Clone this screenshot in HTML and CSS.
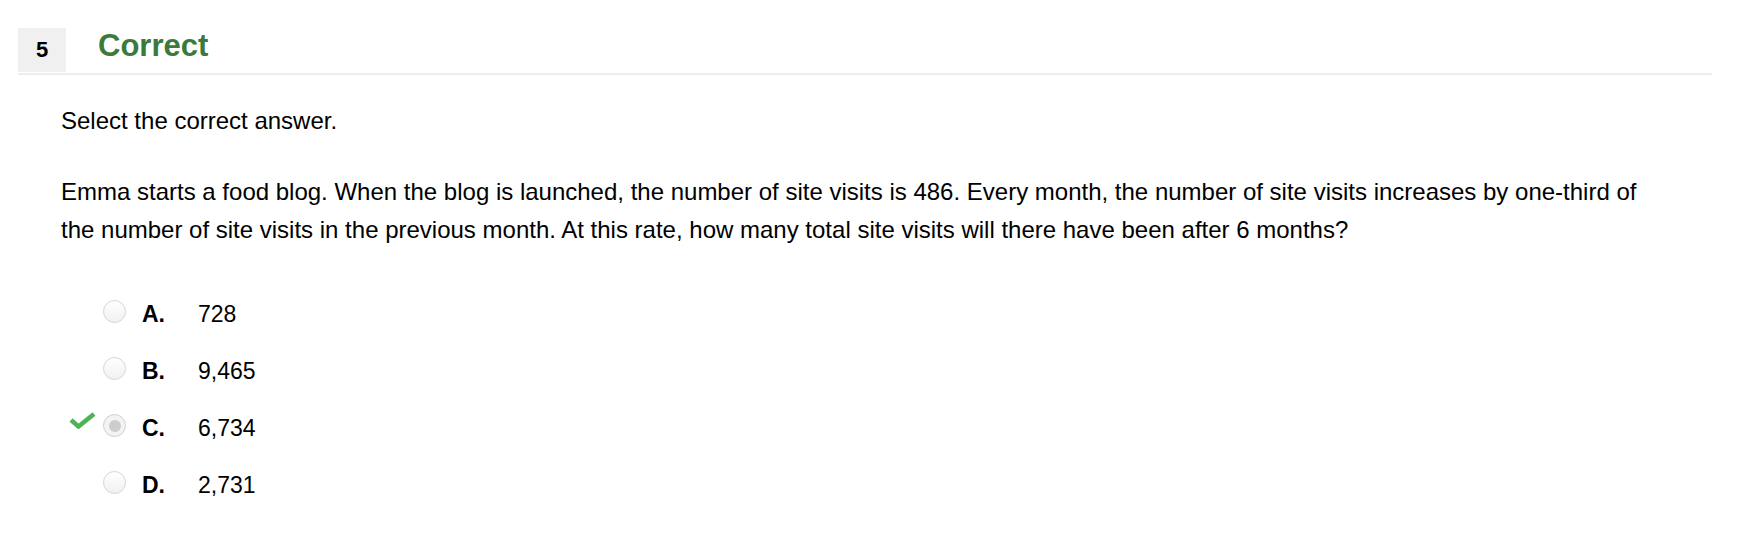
FILE: index.html
```html
<!DOCTYPE html>
<html lang="en">
<head>
<meta charset="utf-8">
<title>Question 5</title>
<link rel="stylesheet" href="styles.css">
</head>
<body>
<div class="question">
  <div class="header">
    <div class="num">5</div>
    <div class="status">Correct</div>
  </div>
  <div class="content">
    <p class="prompt">Select the correct answer.</p>
    <p class="stem">Emma starts a food blog. When the blog is launched, the number of site visits is 486. Every month, the number of site visits increases by one-third of the number of site visits in the previous month. At this rate, how many total site visits will there have been after 6 months?</p>
    <div class="options">
      <div class="option">
        <div class="mark"></div>
        <span class="radio"></span>
        <span class="letter">A.</span>
        <span class="value">728</span>
      </div>
      <div class="option">
        <div class="mark"></div>
        <span class="radio"></span>
        <span class="letter">B.</span>
        <span class="value">9,465</span>
      </div>
      <div class="option">
        <div class="mark">
          <svg class="check" width="27" height="17" viewBox="0 0 27 17"><path d="M2 8 L9.5 14.5 L25 2" fill="none" stroke="#4fb355" stroke-width="4.5" stroke-linejoin="miter" stroke-linecap="butt"/></svg>
        </div>
        <span class="radio selected"></span>
        <span class="letter">C.</span>
        <span class="value">6,734</span>
      </div>
      <div class="option">
        <div class="mark"></div>
        <span class="radio"></span>
        <span class="letter">D.</span>
        <span class="value">2,731</span>
      </div>
    </div>
  </div>
</div>
</body>
</html>
```
FILE: styles.css
```css
html, body {
  margin: 0;
  padding: 0;
  background: #fff;
}
body {
  font-family: "Liberation Sans", Arial, sans-serif;
  color: #000;
}
.question {
  margin: 28px 26px 0 18px;
}
.header {
  display: flex;
  align-items: flex-start;
  border-bottom: 2px solid #eeeeee;
  padding-bottom: 1px;
}
.num {
  width: 48px;
  height: 44px;
  background: #f0f0f0;
  display: flex;
  align-items: center;
  justify-content: center;
  font-weight: bold;
  font-size: 22px;
}
.status {
  margin-left: 32px;
  margin-top: 2px;
  font-size: 31px;
  line-height: 31px;
  font-weight: bold;
  color: #3b7a3b;
}
.content {
  padding-left: 43px;
}
.prompt {
  margin: 27px 0 0 0;
  font-size: 24px;
  line-height: 38px;
}
.stem {
  margin: 33px 0 0 0;
  font-size: 24px;
  line-height: 38px;
  max-width: 1600px;
}
.options {
  margin-top: 37px;
}
.option {
  display: flex;
  align-items: center;
  height: 57px;
  font-size: 23px;
}
.mark {
  width: 42px;
  height: 57px;
  display: flex;
  align-items: center;
}
.check {
  margin-left: 8px;
  margin-bottom: 16px;
}
.radio {
  width: 21px;
  height: 21px;
  border: 1px solid #d6d6d6;
  border-radius: 50%;
  background: linear-gradient(#ffffff, #f1f1f1);
  margin-bottom: 6px;
  display: flex;
  align-items: center;
  justify-content: center;
  flex: none;
}
.radio.selected {
  border-color: #cfcfcf;
  background: #f3f3f3;
}
.radio.selected::after {
  content: "";
  width: 12px;
  height: 12px;
  border-radius: 50%;
  background: #cdcdcd;
}
.letter {
  margin-left: 16px;
  width: 56px;
  font-weight: bold;
}
.value {
  font-weight: normal;
}
```
